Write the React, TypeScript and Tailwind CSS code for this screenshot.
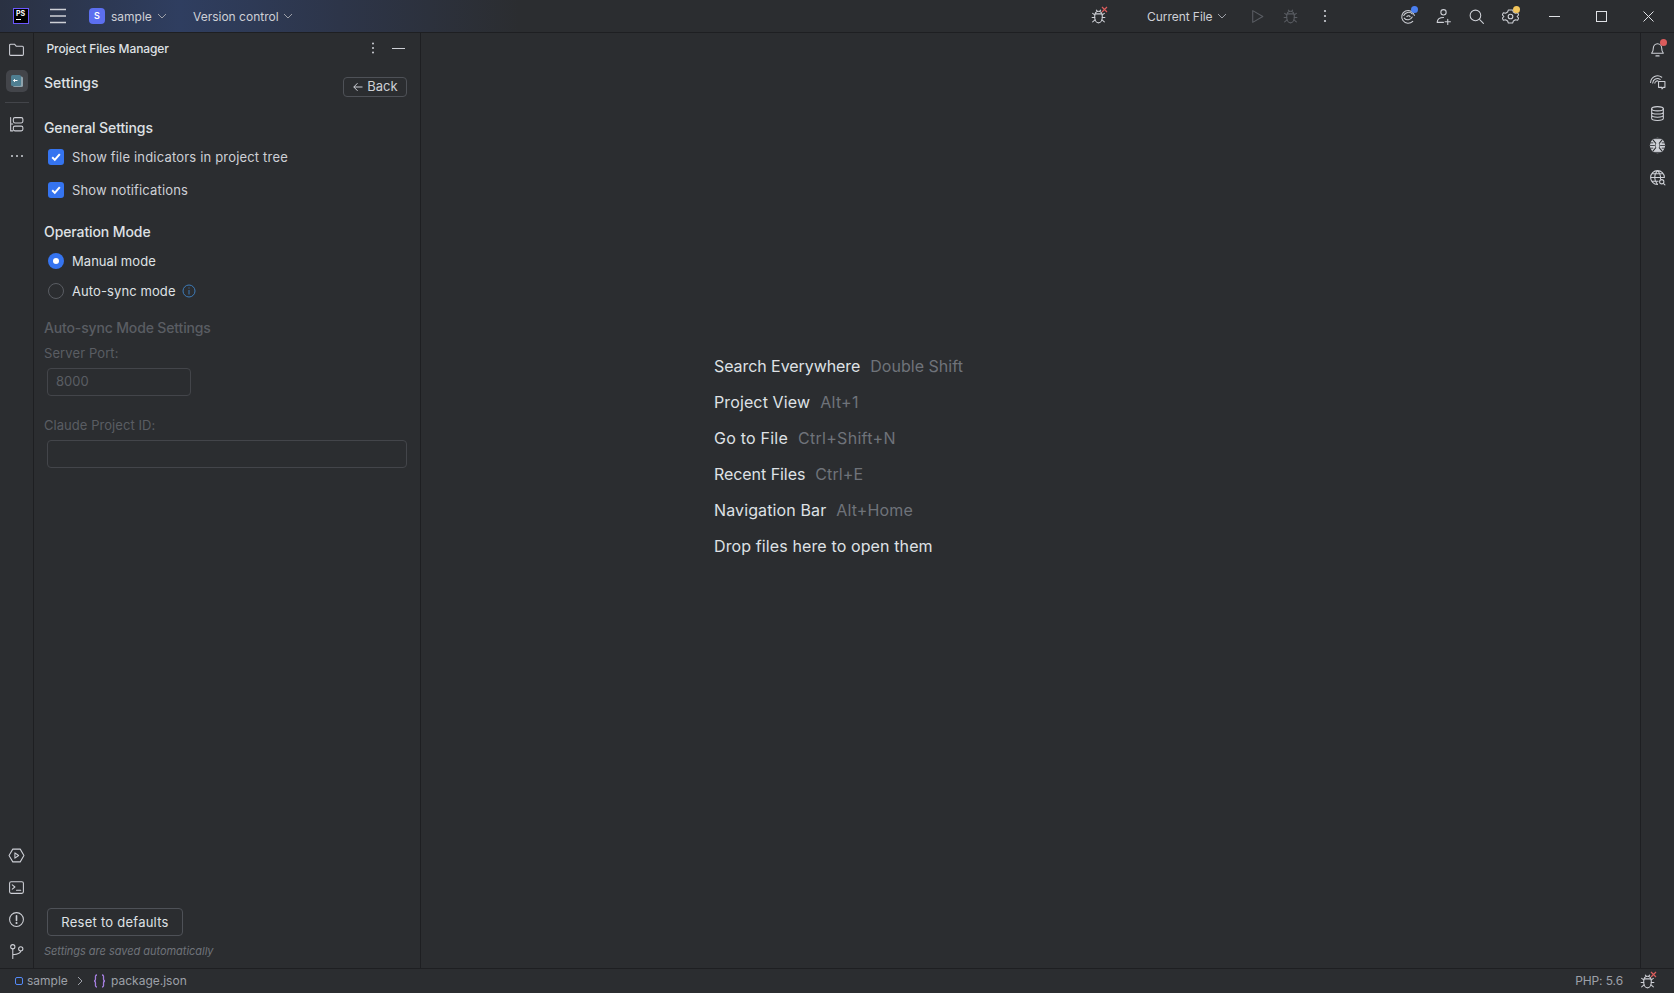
const stroke = "#ced0d6";

function Icon({ children, size = 17, color = stroke }: { children: React.ReactNode; size?: number; color?: string }) {
  return (
    <svg width={size} height={size} viewBox="0 0 16 16" fill="none" stroke={color} strokeWidth="1" strokeLinecap="round" strokeLinejoin="round" className="shrink-0">
      {children}
    </svg>
  );
}

function Chevron({ color = "#9da0a8" }: { color?: string }) {
  return (
    <svg width="10" height="6" viewBox="0 0 10 6" fill="none" stroke={color} className="shrink-0">
      <path d="M1 1l4 4 4-4" />
    </svg>
  );
}

function BugIcon({ color = stroke }: { color?: string }) {
  return (
    <Icon color={color}>
      <path d="M8 3c2.200 0 3.600 2.200 3.600 5.300S10.200 14 8 14s-3.600-2.600-3.600-5.700S5.800 3 8 3z" />
      <path d="M5 5.500h6" />
      <path d="M6 2l1 1.200M10 2L9 3.200" />
      <path d="M2.500 5l2 1.500M13.500 5l-2 1.500M2 9h2.500M11.500 9H14M2.500 13l2.200-1.800M13.500 13l-2.200-1.800" />
    </Icon>
  );
}

function FailedBug() {
  return (
    <span className="relative flex">
      <BugIcon />
      <svg width="7" height="7" viewBox="0 0 7 7" className="absolute -right-[1px] -top-[2px]" stroke="#db5c5c" strokeWidth="1.200">
        <path d="M1 1l5 5M6 1l-5 5" />
      </svg>
    </span>
  );
}

function Dot({ color }: { color: string }) {
  return <span className="absolute -right-[1px] -top-[2px] h-[7px] w-[7px] rounded-full" style={{ backgroundColor: color }} />;
}

function Check() {
  return (
    <span className="flex h-4 w-4 shrink-0 items-center justify-center rounded-[3px] bg-[#3574f0]">
      <svg width="12" height="12" viewBox="0 0 12 12" fill="none" stroke="#ffffff" strokeWidth="2">
        <path d="M2.200 6.300l2.600 2.600 5-5.800" />
      </svg>
    </span>
  );
}

const shortcuts = [
  { label: "Search Everywhere", keys: "Double Shift", labelClass: "tracking-[-0.07px]", keysClass: "tracking-[0.03px]" },
  { label: "Project View", keys: "Alt+1", labelClass: "tracking-[0.12px]", keysClass: "tracking-[0.3px]" },
  { label: "Go to File", keys: "Ctrl+Shift+N", labelClass: "tracking-[0.22px]", keysClass: "tracking-[0.3px]" },
  { label: "Recent Files", keys: "Ctrl+E", labelClass: "tracking-[-0.06px]", keysClass: "tracking-[0.12px]" },
  { label: "Navigation Bar", keys: "Alt+Home", labelClass: "tracking-[0.12px]", keysClass: "tracking-[0.15px]" },
  { label: "Drop files here to open them", keys: "", labelClass: "tracking-[0.12px]", keysClass: "" },
];

function LeftRail() {
  return (
    <aside className="flex w-[34px] shrink-0 flex-col items-center border-r border-[#1e1f22]">
      <div className="mt-[8px] flex h-4 items-center">
        <Icon>
          <path d="M1.500 4a1 1 0 0 1 1-1h3.600l1.800 2h5.600a1 1 0 0 1 1 1v6.500a1 1 0 0 1-1 1h-11a1 1 0 0 1-1-1z" />
        </Icon>
      </div>
      <div className="mt-[13px] flex h-[22px] w-[22px] items-center justify-center rounded-[5px] bg-[#43454a]">
        <svg width="14" height="14" viewBox="0 0 14 14">
          <rect x="3" y="2.500" width="10" height="10.500" rx="1.500" fill="#8fa3ad" />
          <rect x="1" y="1" width="10" height="11" rx="1.500" fill="#4f7f92" />
          <path d="M3.500 6.500h4M3.500 6.500l1.500-1.300M3.500 6.500l1.500 1.300" stroke="#ffffff" fill="none" />
        </svg>
      </div>
      <div className="mt-[10px] h-px w-[24px] bg-[#43454a]" />
      <div className="mt-[13px] flex h-4 items-center">
        <Icon>
          <path d="M2.500 1.500v12.500h2M2.500 7.500h2" />
          <rect x="5" y="1.500" width="9" height="5" rx="1.500" />
          <rect x="5" y="9.500" width="9" height="4.500" rx="1.500" />
        </Icon>
      </div>
      <div className="mt-[16px] flex h-4 items-center">
        <svg width="14" height="4" viewBox="0 0 14 4" fill={stroke}>
          <circle cx="2" cy="2" r="1" />
          <circle cx="7" cy="2" r="1" />
          <circle cx="12" cy="2" r="1" />
        </svg>
      </div>
      <div className="mt-auto mb-[8px] flex flex-col items-center gap-[15px]">
        <Icon>
          <path d="M4.500 2h7l3.500 6-3.500 6h-7L1 8z" />
          <path d="M6.500 5.500l3.500 2.500-3.500 2.500z" />
        </Icon>
        <Icon>
          <rect x="1.500" y="2.500" width="13" height="11" rx="1.500" />
          <path d="M4 5.500l2.500 2-2.500 2M8 10.500h4" />
        </Icon>
        <Icon>
          <circle cx="8" cy="8" r="6.500" />
          <path d="M8 4.500v4.500" strokeWidth="1.500" />
          <circle cx="8" cy="11.300" r=".5" fill={stroke} />
        </Icon>
        <Icon>
          <circle cx="4.500" cy="3.500" r="2" />
          <circle cx="12" cy="5.500" r="2" />
          <path d="M4.500 5.500v9M12 7.500c0 2.500-3 3-7.500 3.500" />
        </Icon>
      </div>
    </aside>
  );
}

function SettingsPanel() {
  return (
    <section className="flex w-[387px] shrink-0 flex-col border-r border-[#1e1f22] pl-[10px] pr-[13px] text-[13px] text-[#ced0d6]">
      <div className="flex h-[30px] items-center">
        <span className="ml-[2.5px] mt-[1px] text-[12px] font-medium tracking-[-0.1px] text-[#dfe1e5]">Project Files Manager</span>
        <svg width="4" height="14" viewBox="0 0 4 14" fill={stroke} className="ml-auto">
          <circle cx="2" cy="2.500" r="1" />
          <circle cx="2" cy="7" r="1" />
          <circle cx="2" cy="11.500" r="1" />
        </svg>
        <span className="ml-[17px] mr-[2px] h-[1px] w-[13px] bg-[#ced0d6]" />
      </div>
      <div className="mt-[10px] flex h-[24px] items-start justify-between">
        <h2 className="text-[14px] font-medium leading-[20px] text-[#dfe1e5]">Settings</h2>
        <button className="mt-[4px] flex h-[20px] w-[64px] items-center justify-center gap-[4px] rounded-[4px] border border-[#4e5157] pl-[1px] text-[13px] text-[#ced0d6]">
          <svg width="10" height="10" viewBox="0 0 10 10" fill="none" stroke={stroke}>
            <path d="M9.500 5H.8M4.500 1.200L.8 5l3.700 3.800" />
          </svg>
          Back
        </button>
      </div>
      <h3 className="mt-[21px] text-[14px] font-medium leading-[20px] tracking-[-0.1px] text-[#dfe1e5]">General Settings</h3>
      <label className="mt-[7px] ml-[4px] flex h-[24px] items-center gap-[8px]">
        <Check />
        <span className="mt-[2px] tracking-[0.18px]">Show file indicators in project tree</span>
      </label>
      <label className="mt-[9px] ml-[4px] flex h-[24px] items-center gap-[8px]">
        <Check />
        <span className="mt-[2px] tracking-[0.15px]">Show notifications</span>
      </label>
      <h3 className="mt-[20px] text-[14px] font-medium leading-[20px] tracking-[-0.1px] text-[#dfe1e5]">Operation Mode</h3>
      <label className="mt-[7px] ml-[4px] flex h-[24px] items-center gap-[8px] text-[#dfe1e5]">
        <span className="flex h-4 w-4 items-center justify-center rounded-full bg-[#3574f0]">
          <span className="h-[6px] w-[6px] rounded-full bg-white" />
        </span>
        <span className="mt-[2px] tracking-[0.05px]">Manual mode</span>
      </label>
      <label className="mt-[6px] ml-[4px] flex h-[24px] items-center gap-[8px] text-[#dfe1e5]">
        <span className="h-4 w-4 rounded-full border border-[#5a5d63]" />
        <span className="mt-[2px] tracking-[0.1px]">Auto-sync mode</span>
        <svg width="14" height="14" viewBox="0 0 14 14" fill="none" stroke="#3d7bb8" className="-ml-[2px]">
          <circle cx="7" cy="7" r="6" />
          <path d="M7 6v4.500M7 3.500v1" />
        </svg>
      </label>
      <h3 className="mt-[15px] text-[14px] font-medium leading-[20px] tracking-[-0.15px] text-[#5a5d63]">Auto-sync Mode Settings</h3>
      <div className="mt-[5px] leading-[20px] tracking-[0.1px] text-[#5a5d63]">Server Port:</div>
      <div className="mt-[5px] ml-[3px] flex h-[28px] w-[144px] items-center rounded-[4px] border border-[#43454a] pl-[8px] text-[#5a5d63]">8000</div>
      <div className="mt-[19px] leading-[20px] tracking-[0.05px] text-[#5a5d63]">Claude Project ID:</div>
      <div className="mt-[5px] ml-[3px] h-[28px] rounded-[4px] border border-[#43454a]" />
      <button className="mt-auto ml-[3px] h-[28px] w-[136px] rounded-[4px] border border-[#4e5157] pt-[1px] text-[13px] tracking-[0.25px] text-[#dfe1e5]">Reset to defaults</button>
      <p className="mt-[5px] mb-[7px] text-[11px] italic leading-[20px] tracking-[-0.03px] text-[#6f737a]">Settings are saved automatically</p>
    </section>
  );
}

function RightRail() {
  return (
    <aside className="flex w-[34px] shrink-0 flex-col items-center gap-[15px] border-l border-[#1e1f22] pt-[8px]">
      <span className="relative flex">
        <Icon>
          <path d="M2.500 11.500c1-1 1.500-2 1.500-4.500 0-2.600 1.800-4.500 4-4.500s4 1.900 4 4.500c0 2.500.5 3.500 1.500 4.500z" />
          <path d="M6.500 14h3" />
        </Icon>
        <Dot color="#db5c5c" />
      </span>
      <Icon>
        <path d="M1.500 9a6.500 6.500 0 0 1 10.500-5M3.500 9.500A4.500 4.500 0 0 1 10.500 6M5.500 9.500a2.500 2.500 0 0 1 3-2" />
        <path d="M9 8h6v5.500h-1.500l-1.300 1.500V13.500H9z" />
      </Icon>
      <Icon>
        <ellipse cx="8" cy="3.500" rx="5.500" ry="2" />
        <path d="M2.500 3.500v9c0 1.100 2.500 2 5.500 2s5.500-.9 5.500-2v-9M2.500 6.500c0 1.100 2.500 2 5.500 2s5.500-.9 5.500-2M2.500 9.500c0 1.100 2.500 2 5.500 2s5.500-.9 5.500-2" />
      </Icon>
      <svg width="17" height="17" viewBox="0 0 16 16" className="shrink-0">
        <circle cx="8" cy="8" r="7.200" fill="#ced0d6" />
        <path d="M3.500 2.500L6.500 6v4l-3 3.500M12.500 2.500L9.500 6v4l3 3.500" stroke="#2b2d30" strokeWidth="1" fill="none" />
        <path d="M6.500 6h3v4h-3z" fill="#ced0d6" />
        <path d="M1 8h4.500M10.500 8H15M1 5.500h3M12 5.500h3M1 10.500h3M12 10.500h3M4.500 1.500h7M4.500 14.500h7" stroke="#2b2d30" strokeWidth=".8" />
      </svg>
      <Icon>
        <path d="M14.500 8A6.500 6.500 0 1 0 8 14.500M1.500 8h13M2.500 4.500h11M2.500 11.500h6M8 1.500c-3.500 3.500-3.500 9.500 0 13M8 1.500c2.300 2.300 3.100 5.400 2.800 8" />
        <circle cx="12" cy="12" r="2" />
        <path d="M13.500 13.500l1.500 1.500" />
      </Icon>
    </aside>
  );
}

export default function App() {
  return (
    <div className="flex h-[993px] w-[1674px] flex-col overflow-hidden whitespace-nowrap bg-[#2b2d30] font-['Inter',sans-serif] text-[13px] text-[#ced0d6]">
      <header className="flex h-[33px] shrink-0 items-center border-b border-[#1e1f22] bg-[linear-gradient(90deg,#2a3142_0px,#2f3e60_180px,#2d3549_340px,#2b2d30_520px)] text-[12px]">
        <span className="ml-[13px] flex h-4 w-4 shrink-0 flex-col border border-[#6b57ff] bg-black pl-[2px] pt-[1px] text-[7px] font-bold leading-[8px] text-white">
          PS
          <span className="mt-[1px] h-px w-[5px] bg-white" />
        </span>
        <svg width="16" height="16" viewBox="0 0 16 16" stroke="#ced0d6" strokeWidth="1.300" className="ml-[21px] shrink-0">
          <path d="M0 1.500h16M0 8h16M0 14.500h16" />
        </svg>
        <span className="ml-[23px] flex h-4 w-4 shrink-0 items-center justify-center rounded-[4px] bg-[#5c6ff0] text-[9px] font-semibold text-white">S</span>
        <span className="ml-[6px] mt-[1px] w-[41px] text-[#ced0d6]">sample</span>
        <span className="ml-[5px] flex"><Chevron /></span>
        <span className="ml-[26px] mt-[1px] w-[84px] text-[#ced0d6]">Version control</span>
        <span className="ml-[6px] flex"><Chevron /></span>

        <span className="ml-[797px] flex"><FailedBug /></span>
        <span className="ml-[40px] mt-[1px] w-[65px] tracking-[-0.05px] text-[#ced0d6]">Current File</span>
        <span className="ml-[5px] flex"><Chevron /></span>
        <span className="ml-[22px] flex">
          <Icon color="#5a5d63"><path d="M3.500 2.500v11l9.500-5.500z" /></Icon>
        </span>
        <span className="ml-[16px] flex"><BugIcon color="#5a5d63" /></span>
        <svg width="4" height="14" viewBox="0 0 4 14" fill={stroke} className="ml-[23.5px] shrink-0">
          <circle cx="2" cy="2" r="1.100" />
          <circle cx="2" cy="7" r="1.100" />
          <circle cx="2" cy="12" r="1.100" />
        </svg>
        <span className="relative ml-[73.5px] flex">
          <Icon>
            <path d="M13.500 7A6 6 0 1 0 12 12.500M3.500 7c1.500-3 5.500-4 8-1.500M4 9.500c2 2.500 6 2 7.500-1M6.500 8c1-1 2.500-.8 3 .2" />
          </Icon>
          <Dot color="#4a7ff0" />
        </span>
        <span className="ml-[18px] flex">
          <Icon>
            <circle cx="8" cy="4" r="2.500" />
            <path d="M2 13.500c.2-2.500 2.300-4.500 6-4.500M2 13.500h6M12 10.500v5M9.500 13h5" />
          </Icon>
        </span>
        <span className="ml-[16px] flex">
          <Icon>
            <circle cx="7" cy="7" r="5" />
            <path d="M11 11l3.500 3.500" />
          </Icon>
        </span>
        <span className="relative ml-[17px] flex">
          <Icon>
            <path d="M6 1.800h4l.7 2 1.900 1.100 2.100-.4 1 1.900L14.200 8l1.500 1.600-1 1.900-2.100-.4-1.900 1.100-.7 2H6l-.7-2-1.900-1.100-2.100.4-1-1.900L1.800 8 .3 6.400l1-1.900 2.100.4 1.900-1.100z" />
            <circle cx="8" cy="8" r="2.200" />
          </Icon>
          <Dot color="#f2c55c" />
        </span>
        <span className="ml-[30px] h-px w-[11px] shrink-0 bg-[#dfe1e5]" />
        <span className="ml-[36px] h-[11px] w-[11px] shrink-0 border border-[#dfe1e5]" />
        <svg width="11" height="11" viewBox="0 0 11 11" stroke="#dfe1e5" className="ml-[36px] shrink-0">
          <path d="M.5.500l10 10M10.500.500l-10 10" />
        </svg>
      </header>

      <div className="flex min-h-0 flex-1">
        <LeftRail />
        <SettingsPanel />
        <main className="flex-1 pl-[293px] pt-[315px]">
          {shortcuts.map((row) => (
            <div key={row.label} className="flex h-[36px] items-center gap-[10px] text-[16px]">
              <span className={`text-[#dfe1e5] ${row.labelClass}`}>{row.label}</span>
              {row.keys && <span className={`text-[#6f737a] ${row.keysClass}`}>{row.keys}</span>}
            </div>
          ))}
        </main>
        <RightRail />
      </div>

      <footer className="flex h-[25px] shrink-0 items-center border-t border-[#1e1f22] text-[12px] text-[#9da0a8]">
        <span className="ml-[15px] h-[8px] w-[8px] rounded-[2px] border border-[#548af7]" />
        <span className="ml-[4px] w-[40px]">sample</span>
        <svg width="6" height="10" viewBox="0 0 6 10" fill="none" stroke="#9da0a8" className="ml-[10px]">
          <path d="M1 1l4 4-4 4" />
        </svg>
        <svg width="13" height="14" viewBox="0 0 13 14" fill="none" stroke="#a57fe0" strokeWidth="1.300" className="ml-[10px]">
          <path d="M4 1C2 1 2.500 3 2.500 4.500 2.500 6 2 7 1 7c1 0 1.500 1 1.500 2.500S2 13 4 13M9 1c2 0 1.500 2 1.500 3.500S11 7 12 7c-1 0-1.500 1-1.500 2.500S11 13 9 13" />
        </svg>
        <span className="ml-[5px]">package.json</span>
        <span className="ml-auto tracking-[-0.1px]">PHP: 5.6</span>
        <span className="ml-[16px] mr-[18px] flex"><FailedBug /></span>
      </footer>
    </div>
  );
}
